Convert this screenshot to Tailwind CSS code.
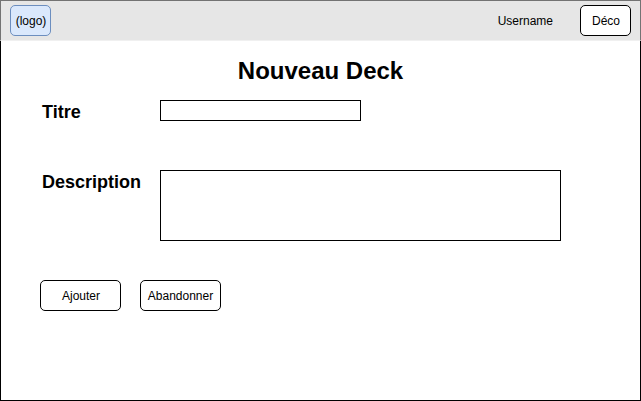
<!DOCTYPE html>
<html lang="fr">
<head>
<meta charset="utf-8">
<title>Nouveau Deck</title>
<script src="https://cdn.jsdelivr.net/npm/@tailwindcss/browser@4"></script>
</head>
<body class="w-[641px] h-[401px] overflow-hidden bg-white text-black text-[12px] font-['Liberation_Sans',Arial,sans-serif]">
<div class="w-[641px] h-[401px] border border-black flex flex-col">
  <header class="shrink-0 -mt-px -mx-px h-[41px] bg-[#e6e6e6] border border-[#737373] border-b-[#f0f0f0] flex items-start pt-1 px-[9px]">
    <div class="w-[41px] h-[31px] rounded-[5px] border border-[#6c8ebf] bg-[#dae8fc] flex items-center justify-center pl-px">(logo)</div>
    <span class="ml-auto mr-[27px] pt-px leading-[31px]">Username</span>
    <button class="w-[51px] h-[31px] rounded-[5px] border border-black bg-white pl-px">Déco</button>
  </header>
  <h1 class="mt-[15px] h-[30px] leading-[30px] text-center text-[24px] font-bold">Nouveau Deck</h1>
  <form class="pl-[39px]">
    <div class="mt-[14px] flex items-start">
      <label class="w-[120px] pl-[2px] text-[18px] leading-[24px] font-bold">Titre</label>
      <input class="w-[201px] h-[21px] border border-black">
    </div>
    <div class="mt-[46px] flex items-start">
      <label class="w-[120px] pl-[2px] text-[18px] leading-[24px] font-bold">Description</label>
      <textarea class="w-[401px] h-[71px] border border-black resize-none"></textarea>
    </div>
    <div class="mt-[39px] flex gap-[19px]">
      <button type="button" class="w-[81px] h-[31px] rounded-[5px] border border-black pl-px">Ajouter</button>
      <button type="button" class="w-[81px] h-[31px] rounded-[5px] border border-black">Abandonner</button>
    </div>
  </form>
</div>
</body>
</html>
